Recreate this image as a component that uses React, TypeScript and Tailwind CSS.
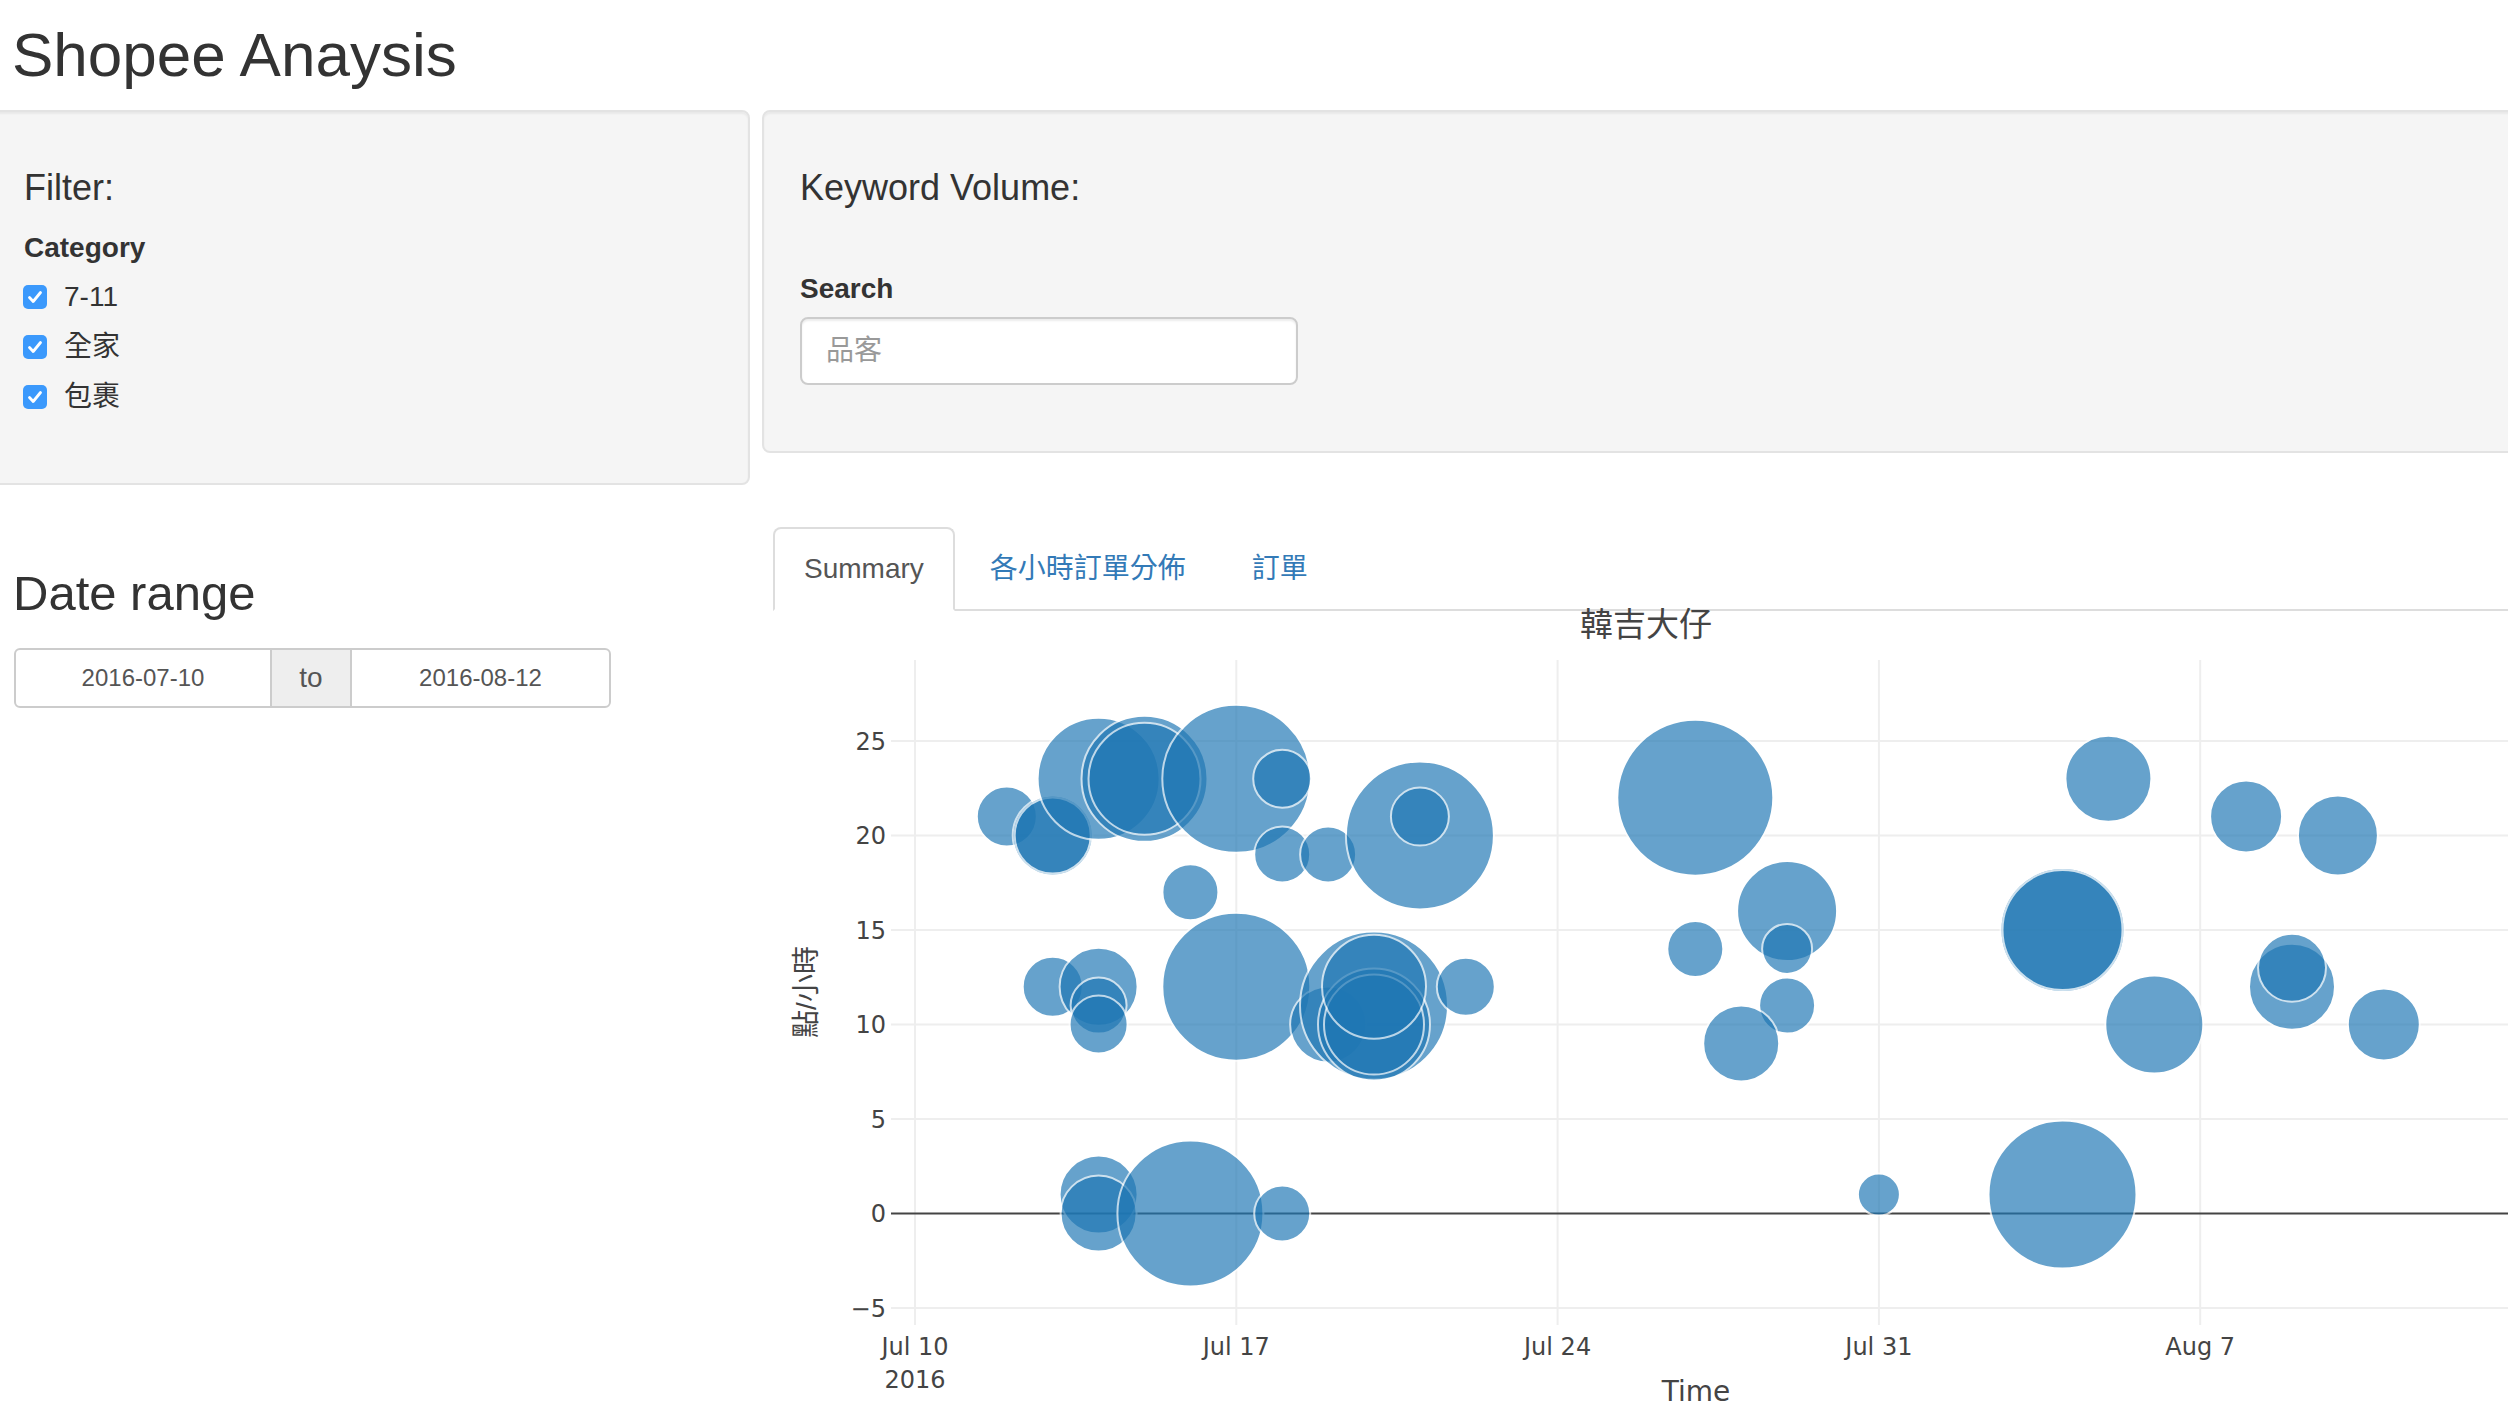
const bubbles: [number, number, number][] = [
  [2, 21, 30],
  [3, 20, 40],
  [3, 20, 38],
  [4, 23, 61],
  [5, 23, 63],
  [5, 23, 56],
  [7, 23, 74],
  [8, 23, 29],
  [6, 17, 28],
  [8, 19, 28],
  [9, 19, 28],
  [11, 20, 74],
  [11, 21, 29],
  [3, 12, 30],
  [4, 12, 39],
  [4, 11, 28],
  [4, 10, 29],
  [7, 12, 74],
  [9, 10, 38],
  [10, 11, 74],
  [10, 10, 56],
  [10, 10, 50],
  [10, 12, 52],
  [12, 12, 29],
  [4, 1, 39],
  [4, 0, 38],
  [6, 0, 73],
  [8, 0, 28],
  [17, 22, 78],
  [17, 14, 28],
  [19, 16, 50],
  [19, 14, 25],
  [19, 11, 28],
  [18, 9, 38],
  [21, 1, 21],
  [25, 1, 74],
  [25, 15, 62],
  [25, 15, 60],
  [26, 23, 43],
  [27, 10, 49],
  [29, 21, 36],
  [31, 20, 40],
  [30, 12, 43],
  [30, 13, 34],
  [32, 10, 36],
];

const px = (d: number) => 142 + 45.9 * d;
const py = (v: number) => 602.5 - 18.9 * v;

const yTicks = [25, 20, 15, 10, 5, 0, -5];
const xTicks: [number, string][] = [
  [0, "Jul 10"],
  [7, "Jul 17"],
  [14, "Jul 24"],
  [21, "Jul 31"],
  [28, "Aug 7"],
];

const tickFont = "'DejaVu Sans', Verdana, sans-serif";
const cjkFont = "'Liberation Sans', 'Noto Sans CJK TC', sans-serif";

function Check({ label }: { label: string }) {
  return (
    <div className="flex items-center h-[40px]">
      <svg width="24" height="24" viewBox="0 0 24 24" className="shrink-0 ml-[-1px]">
        <rect x="0" y="0" width="24" height="24" rx="5" fill="#3b99fc" />
        <path d="M6.5 12.5 L10.2 16.5 L17.5 7.5" stroke="#fff" strokeWidth="2.8" fill="none" strokeLinecap="round" strokeLinejoin="round" />
      </svg>
      <span className="ml-[17px] text-[28px] leading-[40px]">{label}</span>
    </div>
  );
}

function BubbleChart() {
  return (
    <svg width="1735" height="811" className="block overflow-visible">
      <text x="873" y="25" textAnchor="middle" fontSize="33" fill="#444" fontFamily={cjkFont}>
        韓吉大仔
      </text>
      {xTicks.map(([d]) => (
        <line key={d} x1={px(d)} x2={px(d)} y1="49" y2="714" stroke="#eee" strokeWidth="2" />
      ))}
      {yTicks
        .filter((v) => v !== 0)
        .map((v) => (
          <line key={v} x1="118" x2="1735" y1={py(v)} y2={py(v)} stroke="#eee" strokeWidth="2" />
        ))}
      <line x1="118" x2="1735" y1={py(0)} y2={py(0)} stroke="#444" strokeWidth="2" />
      {bubbles.map(([d, v, r], i) => (
        <circle key={i} cx={px(d)} cy={py(v)} r={r} fill="#1f77b4" stroke="#fff" strokeWidth="2" opacity="0.68" />
      ))}
      {yTicks.map((v) => (
        <text key={v} x="113" y={py(v) + 8.5} textAnchor="end" fontSize="24" fill="#444" fontFamily={tickFont}>
          {v < 0 ? "\u2212" + Math.abs(v) : v}
        </text>
      ))}
      {xTicks.map(([d, t]) => (
        <text key={t} x={px(d)} y="744" textAnchor="middle" fontSize="24" fill="#444" fontFamily={tickFont}>
          {t}
        </text>
      ))}
      <text x={px(0)} y="777" textAnchor="middle" fontSize="24" fill="#444" fontFamily={tickFont}>
        2016
      </text>
      <text x="923" y="790" textAnchor="middle" fontSize="28" fill="#444" fontFamily={tickFont}>
        Time
      </text>
      <text
        x="33"
        y="381"
        transform="rotate(-90 33 381)"
        textAnchor="middle"
        dominantBaseline="central"
        fontSize="28"
        fill="#444"
        fontFamily={cjkFont}
      >
        點/小時
      </text>
    </svg>
  );
}

export default function App() {
  return (
    <div className="w-[2508px] h-[1422px] overflow-hidden bg-white text-[#333] font-['Liberation_Sans','Noto_Sans_CJK_TC',sans-serif]">
      <h2 className="h-[110px] pl-[12px] pt-[22px] text-[62px] leading-[66px]">Shopee Anaysis</h2>

      <div className="flex gap-[12px]">
        {/* sidebar */}
        <div className="w-[750px] shrink-0">
          <div className="ml-[-14px] h-[375px] bg-[#f5f5f5] border-2 border-[#e3e3e3] rounded-[8px] shadow-[inset_0_2px_2px_rgba(0,0,0,0.05)] pl-[36px] pt-[56px]">
            <h4 className="text-[36px] leading-[40px] font-medium">Filter:</h4>
            <label className="block mt-[20px] text-[28px] leading-[40px] font-bold">Category</label>
            <div className="mt-[9px] flex flex-col gap-[10px]">
              <Check label="7-11" />
              <Check label="全家" />
              <Check label="包裹" />
            </div>
          </div>

          <h3 className="mt-[82px] pl-[13px] text-[49px] leading-[53px] font-medium">Date range</h3>
          <div className="mt-[28px] ml-[14px] flex w-[597px] h-[60px] text-[24px] text-[#555]">
            <input
              readOnly
              value="2016-07-10"
              className="w-[258px] h-full text-center bg-white border-2 border-[#ccc] rounded-l-[6px] outline-none"
            />
            <span className="w-[78px] h-full flex items-center justify-center bg-[#eee] border-y-2 border-[#ccc] text-[28px]">
              to
            </span>
            <input
              readOnly
              value="2016-08-12"
              className="flex-1 min-w-0 h-full text-center bg-white border-2 border-[#ccc] rounded-r-[6px] outline-none"
            />
          </div>
        </div>

        {/* main */}
        <div className="flex-1 min-w-0">
          <div className="w-[1800px] h-[343px] bg-[#f5f5f5] border-2 border-[#e3e3e3] rounded-[8px] shadow-[inset_0_2px_2px_rgba(0,0,0,0.05)] pl-[36px] pt-[56px]">
            <h4 className="text-[36px] leading-[40px] font-medium">Keyword Volume:</h4>
            <label className="block mt-[61px] text-[28px] leading-[40px] font-bold">Search</label>
            <input
              readOnly
              placeholder="品客"
              className="mt-[8px] block w-[498px] h-[68px] px-[24px] text-[28px] bg-white border-2 border-[#ccc] rounded-[8px] shadow-[inset_0_2px_2px_rgba(0,0,0,0.075)] placeholder:text-[#999] outline-none"
            />
          </div>

          <div className="mt-[74px] ml-[11px] flex border-b-2 border-[#ddd] text-[28px] leading-[40px]">
            <div className="-mb-[2px] mr-[4px] px-[29px] py-[20px] bg-white border-2 border-[#ddd] border-b-white rounded-t-[8px] text-[#555]">
              Summary
            </div>
            <div className="-mb-[2px] mr-[4px] px-[29px] py-[20px] border-2 border-transparent text-[#337ab7]">
              各小時訂單分佈
            </div>
            <div className="-mb-[2px] px-[29px] py-[20px] border-2 border-transparent text-[#337ab7]">訂單</div>
          </div>

          <div className="ml-[11px]">
            <BubbleChart />
          </div>
        </div>
      </div>
    </div>
  );
}
